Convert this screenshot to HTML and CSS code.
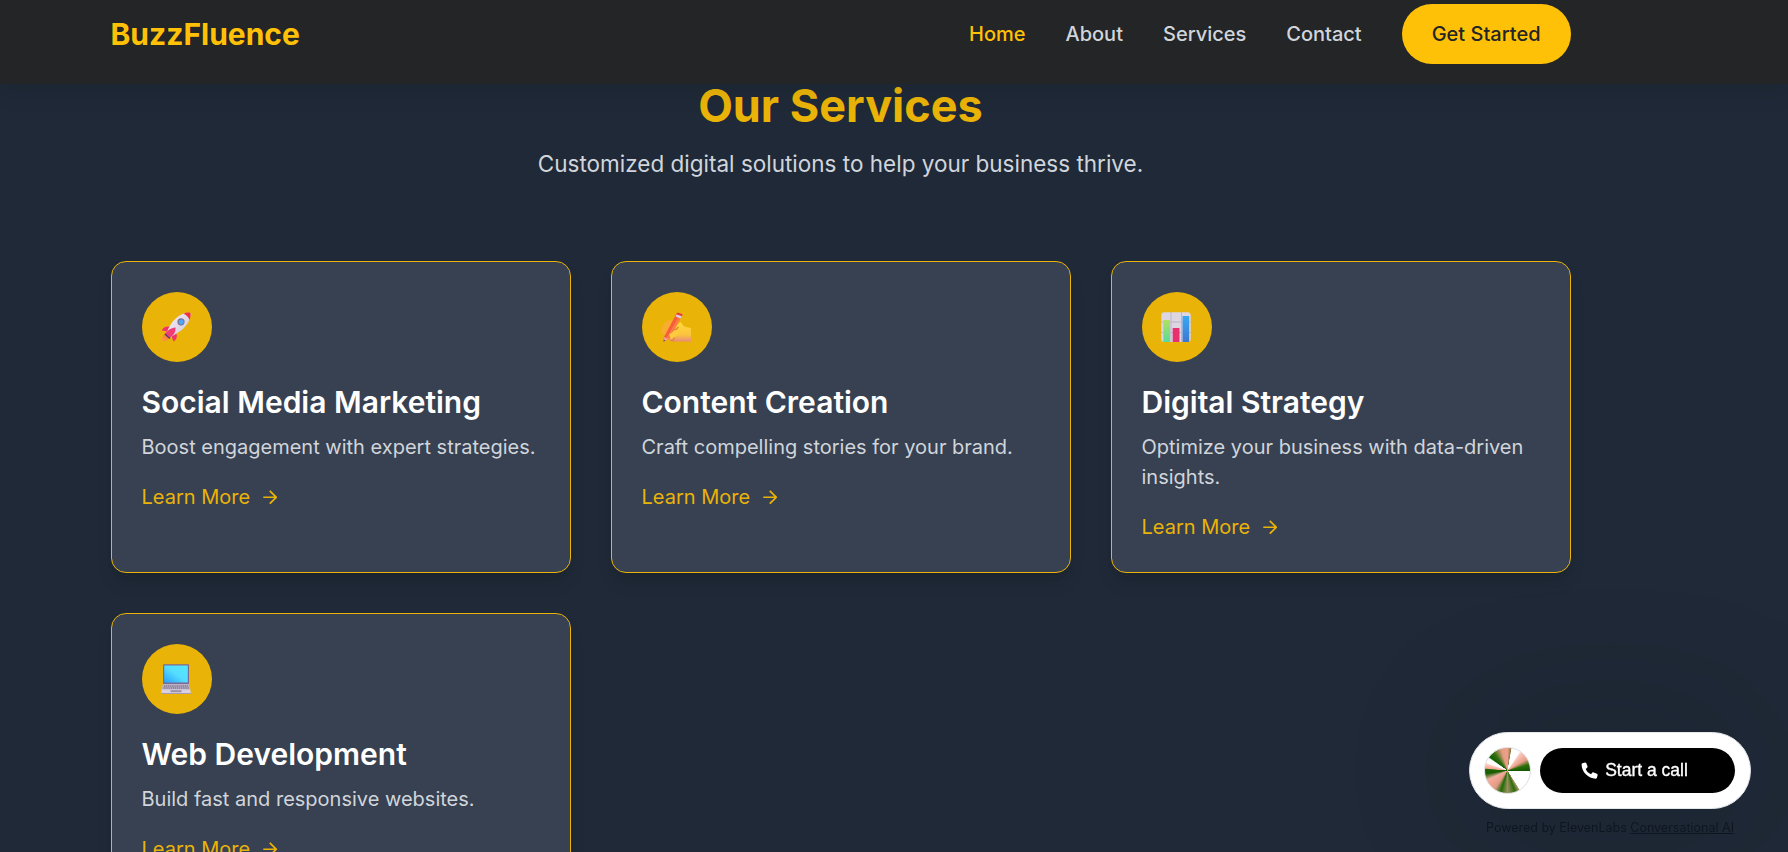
FILE: index.html
```html
<!DOCTYPE html>
<html lang="en">
<head>
<meta charset="utf-8">
<title>BuzzFluence</title>
<link rel="stylesheet" href="styles.css">
</head>
<body>
<header class="navbar">
  <div class="container navbar-inner">
    <a class="logo">BuzzFluence</a>
    <nav class="links">
      <a class="link active">Home</a>
      <a class="link">About</a>
      <a class="link">Services</a>
      <a class="link">Contact</a>
      <a class="cta">Get Started</a>
    </nav>
  </div>
</header>
<main class="container services">
  <h2 class="heading">Our Services</h2>
  <p class="sub">Customized digital solutions to help your business thrive.</p>
  <div class="grid">
    <article class="card">
      <div class="badge">
        <svg class="emoji" viewBox="0 0 30 30">
          <defs><linearGradient id="rb" x1="0" y1="0" x2="1" y2="1"><stop offset="0" stop-color="#f7f1fa"/><stop offset="1" stop-color="#cfc4d8"/></linearGradient>
          <linearGradient id="fl" x1="1" y1="0" x2="0" y2="1"><stop offset="0" stop-color="#f2703a"/><stop offset="1" stop-color="#ffa23a"/></linearGradient></defs>
          <path d="M5 22C1.500 23 .6 26 .5 29.300 4 29.500 7.500 28.500 8.500 25.500Z" fill="url(#fl)"/>
          <path d="M8.500 14.500C4.500 14 2 15.500 .8 18.500L6.500 19.500ZM15.500 21.500C16.500 25 15.500 28 12.500 29.500L10.500 24Z" fill="#f0346a"/>
          <path d="M29.500 .8C21 0 13 6 8.500 14.500L5 21.500 9 25.500 15.500 21.500C24 17 30 9 29.500 .8Z" fill="url(#rb)"/>
          <path d="M22.500 1.800C25 .6 27.500 .4 29.400 .8 29.800 3 29.500 5.500 28.500 8 27.500 5 25.500 3 22.500 1.800Z" fill="#ee2f45"/>
          <path d="M4.500 21L9.500 25.800 8.500 27 3.500 22.500Z" fill="#4b3a72"/>
          <path d="M14.500 15.500C10 16 6 18.500 4.500 21.500L8.500 25.500C12.500 24 14.800 20 14.500 15.500Z" fill="#f23c74"/>
          <circle cx="20" cy="9.800" r="3.600" fill="#77708f"/><circle cx="20.200" cy="9.900" r="2.500" fill="#4fa6f5"/>
        </svg>
      </div>
      <h3 class="title">Social Media Marketing</h3>
      <p class="desc">Boost engagement with expert strategies.</p>
      <a class="more">Learn More <svg class="arrow" viewBox="0 0 15 15"><path d="M.3 7.500H13.600M7 .8l6.700 6.700L7 14.200"/></svg></a>
    </article>
    <article class="card">
      <div class="badge">
        <svg class="emoji" viewBox="0 0 30 30">
          <defs><linearGradient id="hd" x1="0" y1="0" x2="0" y2="1"><stop offset="0" stop-color="#ffd83d"/><stop offset=".65" stop-color="#fbc43c"/><stop offset="1" stop-color="#e98a7c"/></linearGradient></defs>
          <path d="M10 8C5 7.500 .5 13.500 .3 19.500 .2 22 3 23.500 5.500 22.500L13 16 13.500 9.500Z" fill="#f9ad2e"/>
          <path d="M13 15L19.500 10C21 11 21.500 14 24 14.800L30 16V29.500H17C14 29.500 10 30 8.500 28 8 26 9 25 11 24.500Z" fill="url(#hd)"/>
          <path d="M16 .8L21.500 2.500 8 27 2.500 29.800 3 25Z" fill="#f75c3c"/>
          <path d="M19 2L21.500 2.500 8 27 5.500 26Z" fill="#ff7b44"/>
          <path d="M16.500 .6L21.600 2.200 20.700 4.200 15.700 2.400Z" fill="#e93845"/>
          <path d="M15.700 2.400L20.700 4.200 19.500 6.600 14.700 4.600Z" fill="#d8d0e5"/>
          <path d="M3 25L8 27 2.500 29.800Z" fill="#f4a086"/><path d="M2.800 27.500L4.500 28.500 2.500 29.800Z" fill="#6f4b63"/>
          <path d="M8 22C10.500 22.500 13 17.500 16 18.500 19 19.500 18 22.500 15 24L10 27Z" fill="#fecb3e"/>
          <path d="M12.500 17C14 18 16 17 17.500 15M9.500 28C12 29.500 14 27.500 12.500 25.500" fill="none" stroke="#e38733" stroke-width="1.300"/>
        </svg>
      </div>
      <h3 class="title">Content Creation</h3>
      <p class="desc">Craft compelling stories for your brand.</p>
      <a class="more">Learn More <svg class="arrow" viewBox="0 0 15 15"><path d="M.3 7.500H13.600M7 .8l6.700 6.700L7 14.200"/></svg></a>
    </article>
    <article class="card">
      <div class="badge">
        <svg class="emoji" viewBox="0 0 30 30">
          <defs><linearGradient id="gr" x1="0" y1="0" x2="0" y2="1"><stop offset="0" stop-color="#b2e05c"/><stop offset="1" stop-color="#56dc9b"/></linearGradient>
          <linearGradient id="bl" x1="0" y1="0" x2="0" y2="1"><stop offset="0" stop-color="#38a8f4"/><stop offset="1" stop-color="#3d78cf"/></linearGradient></defs>
          <rect x=".3" y=".3" width="29.400" height="29.700" rx="3" fill="#dcd5e2"/>
          <path d="M10 0V30M20.500 0V30M0 10H30M0 20.500H30" stroke="#bdb5c6" stroke-width="1"/>
          <rect x="2.300" y="8" width="6.700" height="22" rx=".6" fill="url(#gr)"/>
          <rect x="11.700" y="16" width="6.800" height="14" rx=".6" fill="#e8306f"/>
          <rect x="21.500" y="4" width="6.700" height="26" rx=".6" fill="url(#bl)"/>
        </svg>
      </div>
      <h3 class="title">Digital Strategy</h3>
      <p class="desc">Optimize your business with data-driven insights.</p>
      <a class="more">Learn More <svg class="arrow" viewBox="0 0 15 15"><path d="M.3 7.500H13.600M7 .8l6.700 6.700L7 14.200"/></svg></a>
    </article>
    <article class="card">
      <div class="badge">
        <svg class="emoji" viewBox="0 0 30 30">
          <defs><linearGradient id="sc" x1="0" y1="1" x2="1" y2="0"><stop offset="0" stop-color="#25a2fb"/><stop offset=".5" stop-color="#55ddff"/><stop offset="1" stop-color="#57e6ff"/></linearGradient></defs>
          <rect x="2" y=".3" width="26" height="20" rx=".8" fill="#7a6a94"/>
          <rect x="3.200" y="1.500" width="23.600" height="17" fill="url(#sc)"/>
          <path d="M2 20H28L29.500 26H.5Z" fill="#bdb3c8"/>
          <path d="M3 22H27.500M2.500 24H28" stroke="#81768f" stroke-width="1.300" stroke-dasharray="1.200 .7"/>
          <path d="M.7 25.500H29.300L29.800 29.500H.2Z" fill="#d9d1df"/><path d="M.2 29H29.800V30H.2Z" fill="#a79bb4"/>
          <rect x="9.500" y="26.200" width="11" height="2" fill="#9a90a8"/>
        </svg>
      </div>
      <h3 class="title">Web Development</h3>
      <p class="desc">Build fast and responsive websites.</p>
      <a class="more">Learn More <svg class="arrow" viewBox="0 0 15 15"><path d="M.3 7.500H13.600M7 .8l6.700 6.700L7 14.200"/></svg></a>
    </article>
  </div>
</main>
<aside class="widget">
  <div class="pill">
    <div class="orb"></div>
    <button class="call"><svg class="phone" viewBox="0 0 18 18"><path d="M5.500 1.100 6.900 4.600C7.100 5.200 7 5.700 6.500 6.100L5 7.400C6.100 9.900 8 11.900 10.600 13L11.900 11.400C12.300 11 12.800 10.800 13.400 11L16.900 12.500C17.400 12.700 17.700 13.200 17.600 13.800L16.900 16.800C16.800 17.300 16.300 17.700 15.700 17.700 7.600 17.700 .6 10.700 .6 2.500 .6 1.900 1 1.400 1.500 1.300L4.300 .5C4.800 .4 5.300 .6 5.500 1.100Z"/></svg>Start a call</button>
  </div>
  <p class="powered">Powered by ElevenLabs <span class="underlined">Conversational AI</span></p>
</aside>
</body>
</html>
```
FILE: styles.css
```css
* { box-sizing: border-box; margin: 0; padding: 0; }
html { font-size: 20px; }
body { height: 852px; overflow: hidden; background: #1f2937; font-family: Inter, sans-serif; line-height: 1.5; color: #fff; }
.container { width: 1460px; margin-left: 110.5px; }
.navbar { position: relative; z-index: 2; height: 84px; padding-top: 4px; background: #232526; box-shadow: 0 5px 25px rgba(0, 0, 0, .1); }
.navbar-inner { display: flex; align-items: center; justify-content: space-between; height: 60px; }
.logo { font-size: 30px; line-height: 40px; font-weight: 700; color: #ffc107; }
.links { display: flex; align-items: center; gap: 40px; }
.link { font-weight: 500; color: #d1d5db; }
.link.active { color: #ffc107; }
.cta { padding: 15px 30px; border-radius: 30px; background: #ffc107; color: #232526; font-weight: 500; }
.services { height: 771px; margin-top: -3px; overflow: hidden; overflow: clip; overflow-clip-margin: 60px; }
.heading { font-size: 45px; line-height: 50px; font-weight: 700; text-align: center; color: #eab308; }
.sub { margin: 15px 0 80px; font-size: 22.5px; line-height: 35px; text-align: center; color: #d1d5db; }
.grid { display: grid; grid-template-columns: repeat(3, 460px); grid-auto-rows: 312px; gap: 40px; }
.card { padding: 30px; border: 1px solid #eab308; border-radius: 15px; background: #374151; box-shadow: 0 12px 19px -4px rgba(0, 0, 0, .1), 0 5px 8px -5px rgba(0, 0, 0, .1); }
.badge { display: flex; align-items: center; justify-content: center; width: 70px; height: 70px; margin-bottom: 20px; padding-right: 1px; border-radius: 50%; background: #eab308; }
.emoji { width: 30px; height: 30px; }
.title { margin-bottom: 10px; font-size: 30px; line-height: 40px; font-weight: 600; }
.desc { margin-bottom: 20px; color: #d1d5db; }
.more { display: flex; align-items: center; gap: 12.5px; color: #eab308; }
.arrow { width: 14.5px; height: 14.5px; fill: none; stroke: currentColor; stroke-width: 1.8; }
.widget { position: fixed; z-index: 3; left: 1469px; top: 732px; width: 282px; }
.pill { display: flex; align-items: center; gap: 9px; height: 77px; padding: 0 14px; border: 1px solid #e5e7eb; border-radius: 39px; background: #fff; box-shadow: 0 0 150px rgba(0, 0, 0, .2); }
.orb { width: 47px; height: 47px; border: 1px solid #dedede; border-radius: 50%; background: conic-gradient(#ee9f8c 0deg, #8b7a3c 9deg, #fff 11deg, #fff 32deg, #f7c6b8 38deg, #e89c86 60deg, #2b6e08 75deg, #155a00 90deg, #fff 91deg, #fff 147deg, #a89468 149deg, #2e6c0d 160deg, #99905c 180deg, #226a07 198deg, #dc9c84 215deg, #f3a18e 230deg, #edb09e 245deg, #165d00 262deg, #1c6500 273deg, #f0a592 276deg, #ffc6b8 286deg, #fff 291deg, #fff 303deg, #125d00 307deg, #337010 322deg, #e69c84 344deg, #ee9f8c 360deg); }
.call { display: flex; align-items: center; justify-content: center; gap: 7px; width: 195px; height: 45px; padding-right: 6px; border: 0; border-radius: 23px; background: #000; color: #fff; font: 500 17.5px "Liberation Sans", Arial, sans-serif; -webkit-text-stroke: .35px #fff; }
.phone { width: 17px; height: 17px; fill: #fff; }
.powered { margin-top: 9px; font-size: 12.5px; line-height: 20px; text-align: center; color: #0e151e; }
.underlined { text-decoration: underline; }
```
